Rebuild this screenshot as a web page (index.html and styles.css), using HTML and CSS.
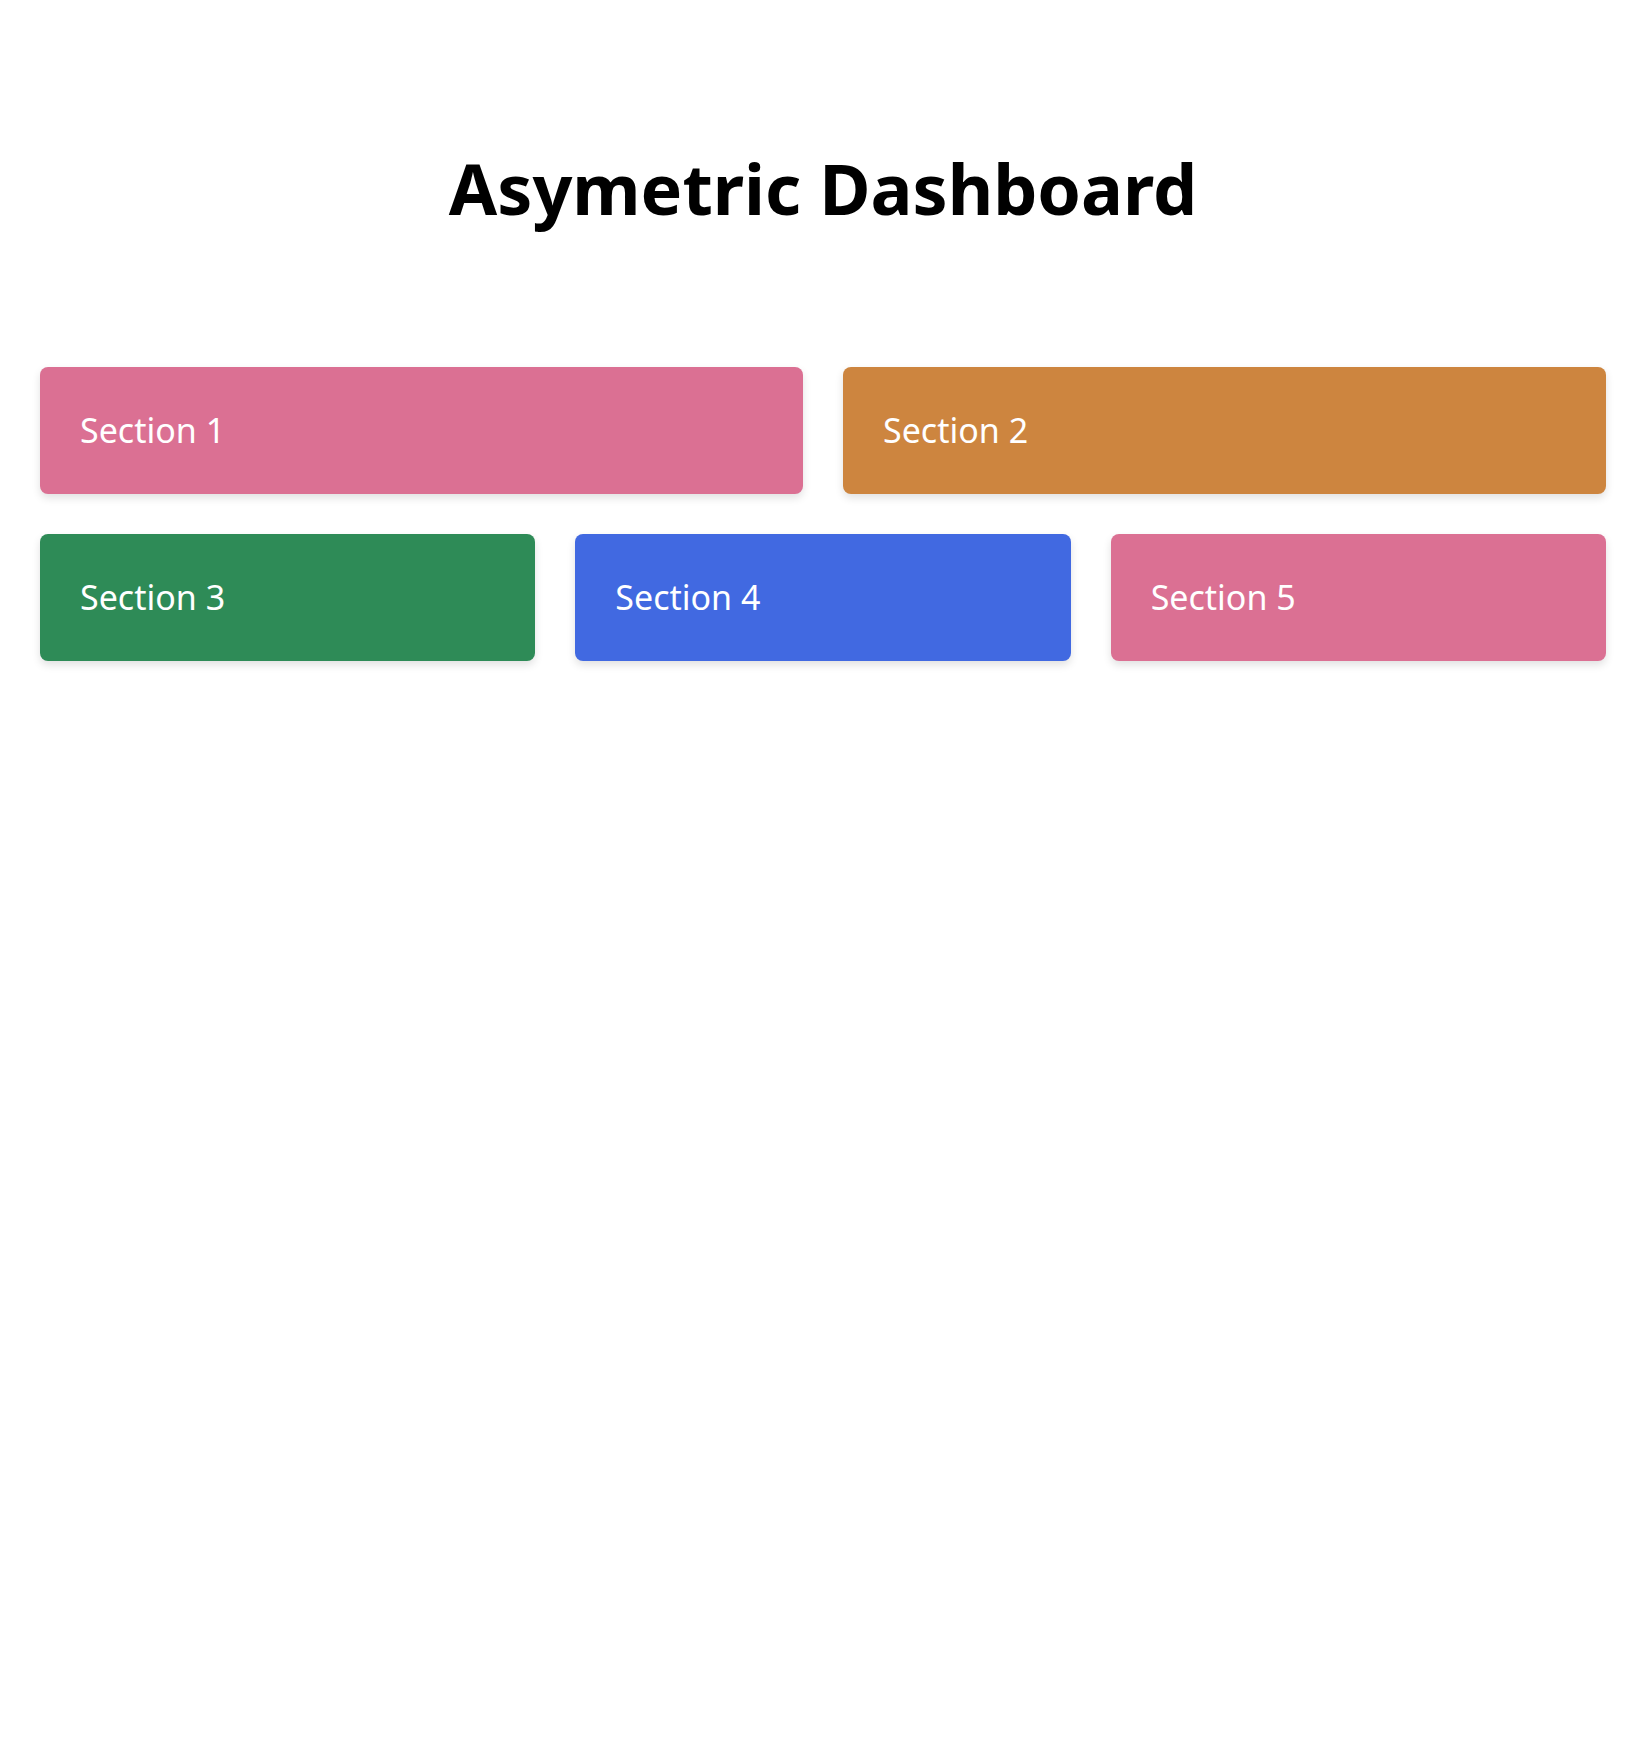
FILE: index.html
```html
<!DOCTYPE html>
<html lang="en">
<head>
<meta charset="utf-8">
<title>Asymetric Dashboard</title>
<link rel="stylesheet" href="styles.css">
</head>
<body>
<div class="page">
  <h1 class="title">Asymetric Dashboard</h1>
  <div class="grid">
    <div class="card wide pink">Section 1</div>
    <div class="card wide orange">Section 2</div>
    <div class="card third green">Section 3</div>
    <div class="card third blue">Section 4</div>
    <div class="card third pink">Section 5</div>
  </div>
</div>
</body>
</html>
```
FILE: styles.css
```css
html, body {
  margin: 0;
  padding: 0;
  background: #fff;
}
.page {
  padding: 40px;
  font-family: "Noto Sans", "Liberation Sans", sans-serif;
}
.title {
  margin: 106px 0 137px;
  text-align: center;
  font-size: 70px;
  font-weight: 700;
  line-height: 1.2;
  color: #000;
}
.grid {
  display: grid;
  grid-template-columns: repeat(6, 1fr);
  gap: 40px;
}
.card {
  border-radius: 8px;
  padding: 40px;
  color: #fff;
  font-size: 34px;
  line-height: 47px;
  box-shadow: 0 4px 8px rgba(0, 0, 0, 0.12);
}
.wide { grid-column: span 3; }
.third { grid-column: span 2; }
.pink { background: #db7093; }
.orange { background: #cd853f; }
.green { background: #2e8b57; }
.blue { background: #4169e1; }
```
